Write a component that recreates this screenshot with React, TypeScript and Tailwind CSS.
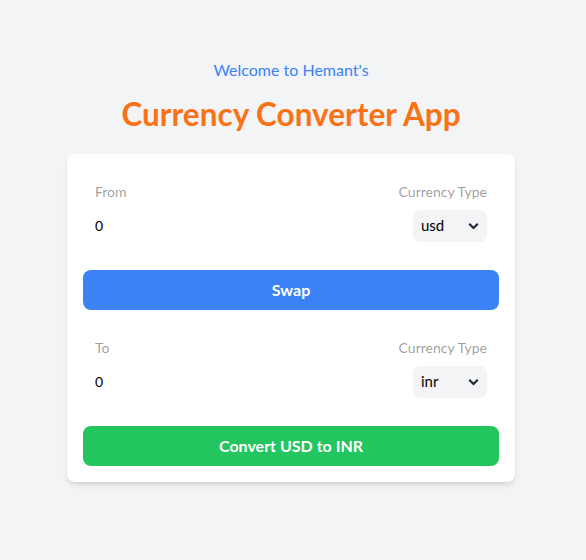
import React, { useState } from "react";

function InputBox({
  label,
  amount,
  currency,
  options,
  onCurrencyChange,
}: {
  label: string;
  amount: number;
  currency: string;
  options: string[];
  onCurrencyChange: (c: string) => void;
}) {
  return (
    <div className="bg-white p-3 rounded-lg text-sm flex">
      <div className="w-1/2">
        <label className="text-black/40 mb-2 inline-block">{label}</label>
        <input
          className="outline-none w-full bg-transparent py-1.5 text-black"
          type="number"
          value={amount}
          readOnly
        />
      </div>
      <div className="w-1/2 flex flex-wrap justify-end text-right">
        <p className="text-black/40 mb-2 w-full">Currency Type</p>
        <div className="relative">
          <select
            className="appearance-none rounded-lg pl-2 pr-8 py-[5px] w-[74px] bg-[#f3f4f6] cursor-pointer outline-none text-left text-black text-[15px]"
            value={currency}
            onChange={(e) => onCurrencyChange(e.target.value)}
          >
            {options.map((o) => (
              <option key={o} value={o}>
                {o}
              </option>
            ))}
          </select>
          <svg
            className="pointer-events-none absolute right-[8px] top-1/2 -translate-y-1/2"
            width="11"
            height="7"
            viewBox="0 0 11 7"
          >
            <path d="M1.2 1.2 L5.5 5.5 L9.8 1.2" fill="none" stroke="#1f2937" strokeWidth="2.2" />
          </svg>
        </div>
      </div>
    </div>
  );
}

export default function App() {
  const [from, setFrom] = useState("usd");
  const [to, setTo] = useState("inr");
  const options = ["usd", "inr", "eur", "gbp"];

  return (
    <div className="min-h-screen w-full bg-[#f3f4f6] pr-1 pt-[58px] font-['Segoe_UI','Lato',sans-serif]">
      <p className="text-center text-[#3b82f6] mb-[14px]">Welcome to Hemant's</p>
      <h1 className="text-center text-[31.5px] leading-9 font-bold text-[#f97316] mb-[22px]">
        Currency Converter App
      </h1>
      <div className="w-full max-w-md mx-auto bg-white rounded-lg shadow-md p-4">
        <InputBox label="From" amount={0} currency={from} options={options} onCurrencyChange={setFrom} />
        <button
          className="w-full my-4 h-10 bg-[#3b82f6] text-white font-bold rounded-lg"
          onClick={() => {
            setFrom(to);
            setTo(from);
          }}
        >
          Swap
        </button>
        <InputBox label="To" amount={0} currency={to} options={options} onCurrencyChange={setTo} />
        <button className="w-full mt-4 h-10 bg-[#22c55e] text-white font-bold rounded-lg">
          Convert {from.toUpperCase()} to {to.toUpperCase()}
        </button>
      </div>
    </div>
  );
}
